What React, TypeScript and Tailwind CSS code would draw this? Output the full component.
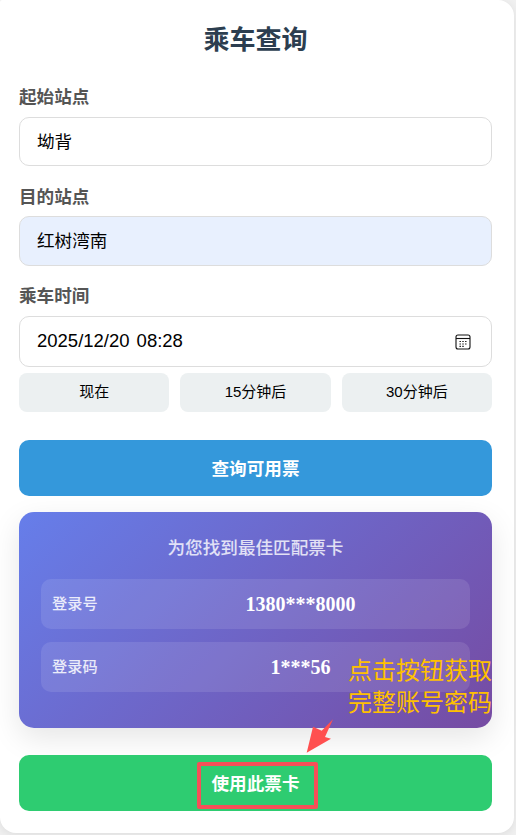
const FONT = "font-['Liberation_Sans','Noto_Sans_CJK_SC',sans-serif]";

function Calendar() {
  return (
    <svg width="16" height="16" viewBox="0 0 16 16" fill="none" className="block">
      <rect x="1" y="1" width="14" height="14" rx="2" stroke="#111" strokeWidth="1.1" />
      <path d="M1 4.5h14" stroke="#111" strokeWidth="1.1" />
      <path d="M4.5 7.5h1.4M7.3 7.5h1.4M10.1 7.5h1.4M4.5 10h1.4M7.3 10h1.4M10.1 10h1.4M4.5 12.3h1.4M7.3 12.3h1.4" stroke="#111" strokeWidth="1.2" />
    </svg>
  );
}

function Row({ label, value }: { label: string; value: string }) {
  return (
    <div className="flex h-[50px] items-center rounded-[10px] bg-white/10 pr-[11px] pl-[11px]">
      <span className="w-[90px] shrink-0 text-[15.2px] font-medium text-white/85">{label}</span>
      <span className="flex-1 text-center font-['Liberation_Serif','Noto_Sans_CJK_SC',serif] text-[20px] font-bold text-white">
        {value}
      </span>
    </div>
  );
}

export default function App() {
  return (
    <div className={`relative h-[835px] w-[516px] overflow-hidden bg-[#f0f0f0] ${FONT}`}>
      <div className="h-[833px] w-[514px] rounded-[16px] rounded-tl-[2px] bg-white pt-[22px] pr-[22px] pl-[19px] shadow-[0_2px_10px_rgba(0,0,0,0.08)]">
        <h1 className="text-center text-[26px] leading-[36px] font-bold text-[#2c3e50]">乘车查询</h1>

        <div className="mt-[27px] text-[17.6px] leading-[24px] font-bold text-[#555555]">起始站点</div>
        <div className="mt-[8px] flex h-[49px] items-center rounded-[10px] border border-[#dddddd] px-[17px] pt-[2px] text-[17.6px] text-black">坳背</div>

        <div className="mt-[19px] text-[17.6px] leading-[24px] font-bold text-[#555555]">目的站点</div>
        <div className="mt-[7px] flex h-[50px] items-center rounded-[10px] border border-[#dddddd] bg-[#e8f0fe] px-[17px] text-[17.6px] text-black">红树湾南</div>

        <div className="mt-[18px] text-[17.6px] leading-[24px] font-bold text-[#555555]">乘车时间</div>
        <div className="mt-[8px] flex h-[51px] items-center justify-between rounded-[10px] border border-[#dddddd] pr-[20px] pl-[17px] text-[18.5px] text-black">
          <span className="mb-[2px] flex gap-[7px]">
            <span>2025/12/20</span>
            <span>08:28</span>
          </span>
          <Calendar />
        </div>

        <div className="mt-[6px] grid grid-cols-3 gap-[11px]">
          {["现在", "15分钟后", "30分钟后"].map((t) => (
            <div key={t} className="flex h-[39px] items-center justify-center rounded-[8px] bg-[#ecf0f1] text-[15px] text-black">{t}</div>
          ))}
        </div>

        <div className="mt-[28px] flex h-[56px] items-center justify-center rounded-[10px] bg-[#3498db] pt-[2px] text-[17.6px] font-bold text-white">查询可用票</div>

        <div className="mt-[16px] h-[216px] rounded-[15px] bg-[linear-gradient(135deg,#667eea_0%,#764ba2_100%)] px-[22px] pt-[24px] shadow-[0_10px_30px_rgba(0,0,0,0.1)]">
          <div className="text-center text-[17.6px] leading-[24px] font-medium text-white/80">为您找到最佳匹配票卡</div>
          <div className="mt-[19px] flex flex-col gap-[13px]">
            <Row label="登录号" value="1380***8000" />
            <Row label="登录码" value="1***56" />
          </div>
        </div>

        <div className="mt-[27px] flex h-[56px] items-center justify-center rounded-[10px] bg-[#2ecc71] pt-[2px] text-[17.6px] font-bold text-white">使用此票卡</div>
      </div>

      <div className="absolute top-[655px] left-[348px] text-[24px] leading-[32px] whitespace-nowrap text-[#ffc000]">
        点击按钮获取
        <br />
        完整账号密码
      </div>
      <svg className="absolute top-[715px] left-[300px]" width="40" height="42" viewBox="0 0 40 42">
        <polygon points="6.7,37.7 13,11.7 21.7,15.7 33,4.3 25,22 31,23.7" fill="#ff5050" />
      </svg>
      <div className="absolute top-[762px] left-[197px] h-[47px] w-[121px] rounded-[2px] border-[4px] border-[#f65058]" />
    </div>
  );
}
